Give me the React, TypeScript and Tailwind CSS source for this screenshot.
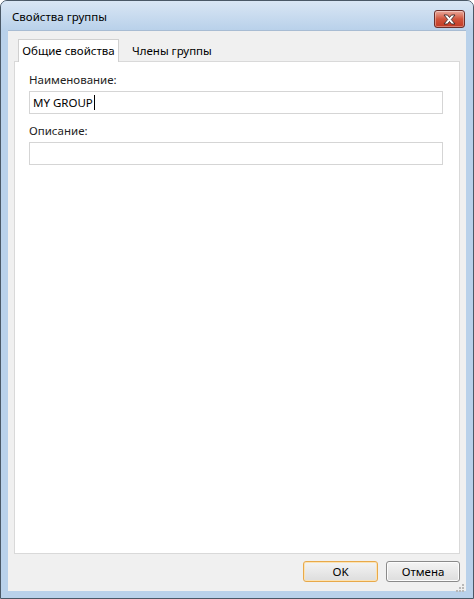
import { useState } from "react"

function CloseButton() {
  return (
    <div className="absolute left-[433px] top-[9px] flex h-[18px] w-[31px] items-center justify-center rounded-[3px] border border-[#6b2e2a] bg-gradient-to-b from-[#e9a99c] via-[#d0543c] to-[#c23a24] shadow-[inset_0_0_0_1px_rgba(255,255,255,0.35)]">
      <svg width="13" height="11" viewBox="0 0 13 11">
        <path
          d="M1 1 L4.5 1 L6.5 3.5 L8.5 1 L12 1 L8.3 5.5 L12 10 L8.5 10 L6.5 7.5 L4.5 10 L1 10 L4.7 5.5 Z"
          fill="#ffffff"
          stroke="#3a2a2a"
          strokeWidth="0.9"
          strokeLinejoin="round"
        />
      </svg>
    </div>
  )
}

function Field({ label, value, caret }: { label: string; value?: string; caret?: boolean }) {
  return (
    <div className="flex flex-col">
      <div className="h-[16px] text-[11.5px] leading-[16px] text-[#222]">{label}</div>
      <div className="mt-[3px] flex h-[23px] items-center border border-[#d5d5d5] bg-white px-[3px] text-[11.5px] text-black">
        <span>{value}</span>
        {caret && <span className="ml-px inline-block h-[15px] w-px bg-black" />}
      </div>
    </div>
  )
}

export default function App() {
  const [tab, setTab] = useState(0)

  return (
    <div
      className="relative flex h-[599px] w-[474px] flex-col overflow-hidden rounded-t-[7px] border border-[#4a5866] bg-[#b9d1ea]"
      style={{ fontFamily: '"Noto Sans", "Open Sans", sans-serif' }}
    >
      {/* заголовок окна */}
      <div className="flex h-[29px] shrink-0 items-center bg-gradient-to-b from-[#d9e6f4] to-[#b9d1ea] pl-[11px] pt-[2px]">
        <span className="text-[11.5px] text-black">Свойства группы</span>
      </div>
      <CloseButton />

      {/* клиентская область */}
      <div className="mx-[7px] mb-[7px] flex flex-1 flex-col border-t border-[#a8bcd3] bg-[#f0f0f0]">
        {/* вкладки */}
        <div className="flex h-[30px] items-end pl-[10px] pt-[8px]">
          <button
            onClick={() => setTab(0)}
            className={
              tab === 0
                ? "relative z-10 -mb-px flex h-[23px] w-[101px] items-center justify-center border border-b-0 border-[#d0d0d0] bg-white text-[11.5px] text-black"
                : "flex h-[21px] items-center px-[13px] text-[11.5px] text-black"
            }
          >
            Общие свойства
          </button>
          <button
            onClick={() => setTab(1)}
            className={
              tab === 1
                ? "relative z-10 -mb-px flex h-[23px] items-center justify-center border border-b-0 border-[#d0d0d0] bg-white px-[12px] text-[11.5px] text-black"
                : "flex h-[21px] items-center pl-[13px] text-[11.5px] text-black"
            }
          >
            Члены группы
          </button>
        </div>

        {/* панель */}
        <div className="ml-[6px] mr-[6px] flex flex-1 flex-col gap-[9px] border border-[#d9d9d9] bg-white pl-[14px] pr-[16px] pt-[10px]">
          {tab === 0 && (
            <>
              <Field label="Наименование:" value="MY GROUP" caret />
              <Field label="Описание:" />
            </>
          )}
        </div>

        {/* кнопки */}
        <div className="flex h-[37px] shrink-0 items-start justify-end gap-[8px] pr-[6px] pt-[7px]">
          <button className="h-[21px] w-[75px] rounded-[3px] border border-[#e8a94a] bg-gradient-to-b from-[#f4f4f4] to-[#dddddd] text-[11.5px] text-black shadow-[inset_0_0_0_1px_#fbe3b5]">
            OK
          </button>
          <button className="h-[21px] w-[74px] rounded-[3px] border border-[#8a8a8a] bg-gradient-to-b from-[#f4f4f4] to-[#dddddd] text-[11.5px] text-black shadow-[inset_0_0_0_1px_#fcfcfc]">
            Отмена
          </button>
        </div>
      </div>

      {/* уголок для изменения размера */}
      <svg className="absolute left-[455px] top-[583px]" width="9" height="9" viewBox="0 0 9 9">
        <g fill="#b8b8b8">
          <rect x="6" y="0" width="2" height="2" />
          <rect x="3" y="3" width="2" height="2" />
          <rect x="6" y="3" width="2" height="2" />
          <rect x="0" y="6" width="2" height="2" />
          <rect x="3" y="6" width="2" height="2" />
          <rect x="6" y="6" width="2" height="2" />
        </g>
      </svg>
    </div>
  )
}
